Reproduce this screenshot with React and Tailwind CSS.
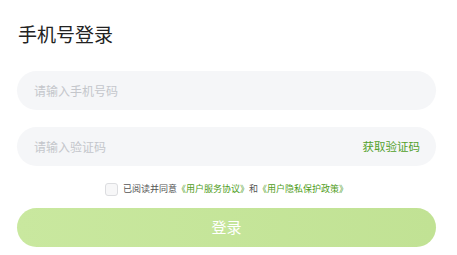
import React from 'react';

export default function App() {
    return (
        <div className="w-[457px] h-[255px] bg-white pl-[17px] pr-[21px] pt-[22px] flex flex-col" style={{ fontFamily: '"Noto Sans CJK SC", "Noto Sans", sans-serif' }}>
            <div className="text-[19px] leading-[24px] text-[#222] pl-px">手机号登录</div>
            <div className="mt-[25px] h-[39px] rounded-full bg-[#f5f6f8] flex items-center px-[17px]">
                <span className="text-[12px] text-[#c4c6cb]">请输入手机号码</span>
            </div>
            <div className="mt-[17px] h-[39px] rounded-full bg-[#f5f6f8] flex items-center justify-between pl-[17px] pr-[16px]">
                <span className="text-[12px] text-[#c4c6cb]">请输入验证码</span>
                <span className="text-[11.5px] text-[#52a02a]">获取验证码</span>
            </div>
            <div className="mt-[16px] h-[14px] flex items-center justify-center gap-[5px] text-[9px]">
                <span className="w-[13px] h-[13px] rounded-[3px] border border-[#dcdde0] bg-[#f7f7f8]"></span>
                <span className="text-[#555]">
                    已阅读并同意<span className="text-[#4f9d22]">《用户服务协议》</span>和<span className="text-[#4f9d22]">《用户隐私保护政策》</span>
                </span>
            </div>
            <button className="mt-[12px] h-[39px] w-full rounded-full bg-gradient-to-r from-[#c9e89f] to-[#c1e294] text-white text-[15px]">
                登录
            </button>
        </div>
    );
}
